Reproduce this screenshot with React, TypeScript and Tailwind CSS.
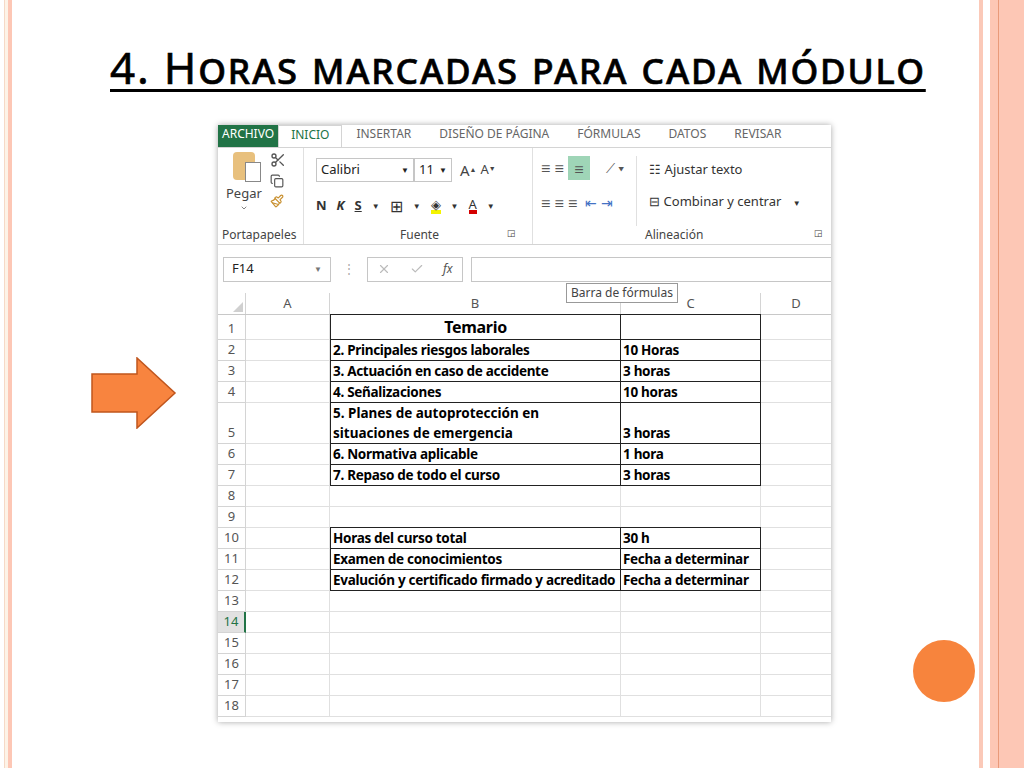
import { Scissors, Copy, Paintbrush, X, Check, ChevronDown } from "lucide-react";

const rowH = [25, 21, 21, 21, 41, 21, 21, 21, 21, 21, 21, 21, 21, 21, 21, 21, 21, 21];
type R = { b?: string; c?: string; box?: boolean; head?: boolean; wrap?: boolean };
const rows: R[] = [
  { b: "Temario", head: true, box: true },
  { b: "2. Principales riesgos laborales", c: "10 Horas", box: true },
  { b: "3. Actuación en caso de accidente", c: "3 horas", box: true },
  { b: "4. Señalizaciones", c: "10 horas", box: true },
  { b: "5. Planes de autoprotección en situaciones de emergencia", c: "3 horas", box: true, wrap: true },
  { b: "6. Normativa aplicable", c: "1 hora", box: true },
  { b: "7. Repaso de todo el curso", c: "3 horas", box: true },
  {}, {},
  { b: "Horas del curso total", c: "30 h", box: true },
  { b: "Examen de conocimientos", c: "Fecha a determinar", box: true },
  { b: "Evalución y certificado firmado y acreditado", c: "Fecha a determinar", box: true },
  {}, {}, {}, {}, {}, {},
];

function Grid() {
  return (
    <div className="font-['Liberation_Sans',sans-serif] text-[13px]">
      <div className="flex h-[22px] bg-white border-b border-[#c8c8c8] text-[#555]">
        <div className="w-[28px] border-r border-[#d4d4d4] flex items-end justify-end p-[2px]"><div className="w-0 h-0 border-l-[10px] border-l-transparent border-b-[10px] border-b-[#d0d0d0]" /></div>
        <div className="w-[84px] border-r border-[#d4d4d4] flex items-center justify-center">A</div>
        <div className="w-[291px] border-r border-[#d4d4d4] flex items-center justify-center">B</div>
        <div className="w-[140px] border-r border-[#d4d4d4] flex items-center justify-center">C</div>
        <div className="w-[70px] flex items-center justify-center">D</div>
      </div>
      {rows.map((r, i) => (
        <div key={i} className="flex" style={{ height: rowH[i] }}>
          <div className={`w-[28px] border-r border-b border-[#d4d4d4] flex items-end justify-center pb-[1px] ${i === 13 ? "bg-[#e1e1e1] text-[#217346] border-r-2 border-r-[#217346]" : "bg-white text-[#555]"}`}>{i + 1}</div>
          <div className="w-[84px] border-r border-b border-[#e0e0e0]" />
          <div className={`w-[291px] px-[2px] font-['Open_Sans',sans-serif] font-bold text-[13.5px] leading-[20px] text-black ${r.box ? "border-[1.5px] border-[#222] -mt-[1px]" : "border-r border-b border-[#e0e0e0]"} ${r.head ? "text-center text-[16px] leading-[24px]" : ""} flex items-end ${r.head ? "justify-center" : ""}`}>
            <span className={r.wrap ? "pr-2" : "whitespace-nowrap tracking-[-0.3px]"}>{r.b}</span>
          </div>
          <div className={`w-[140px] px-[2px] font-['Open_Sans',sans-serif] font-bold text-[13.5px] leading-[20px] text-black flex items-end whitespace-nowrap tracking-[-0.3px] ${r.box ? "border-[1.5px] border-l-0 border-[#222] -mt-[1px]" : "border-r border-b border-[#e0e0e0]"}`}>{r.c}</div>
          <div className="w-[70px] border-b border-[#e0e0e0]" />
        </div>
      ))}
    </div>
  );
}

function Ribbon() {
  return (
    <div className="font-['Liberation_Sans',sans-serif] text-[12px] text-[#444]">
      <div className="flex h-[22px] items-end bg-white text-[12px] text-[#666] overflow-hidden">
        <div className="bg-[#217346] text-white px-1 h-[22px] flex items-start -mt-3">ARCHIVO</div>
        <div className="px-3 h-[22px] border-x border-t border-[#d4d4d4] text-[#217346] -mt-3 flex items-start">INICIO</div>
        {["INSERTAR", "DISEÑO DE PÁGINA", "FÓRMULAS", "DATOS", "REVISAR"].map((t) => (
          <div key={t} className="px-[14px] h-[22px] flex items-start -mt-3">{t}</div>
        ))}
      </div>
      <div className="h-[98px] bg-white border-t border-b border-[#d4d4d4] flex">
        <div className="w-[86px] border-r border-[#e0e0e0] flex flex-col">
          <div className="flex flex-1 pt-1 pl-2 gap-2">
            <div className="flex flex-col items-center">
              <div className="w-[22px] h-[28px] bg-[#e8c07d] rounded-sm relative"><div className="absolute right-[-6px] bottom-[-2px] w-[16px] h-[20px] bg-white border border-[#888]" /></div>
              <span className="mt-1 text-[13px]">Pegar</span>
              <ChevronDown size={8} />
            </div>
            <div className="flex flex-col gap-[6px] text-[#555]"><Scissors size={16} /><Copy size={14} /><Paintbrush size={14} className="text-[#c89030]" /></div>
          </div>
          <div className="h-[18px] text-[12px] pl-1">Portapapeles ◲</div>
        </div>
        <div className="w-[229px] border-r border-[#e0e0e0] flex flex-col">
          <div className="flex-1 pt-[10px] pl-[12px]">
            <div className="flex items-center gap-1">
              <div className="w-[98px] h-[24px] border border-[#c6c6c6] flex items-center justify-between px-1 text-[13px] text-[#222]">Calibri<span className="text-[8px]">▼</span></div>
              <div className="w-[38px] h-[24px] border border-[#c6c6c6] flex items-center justify-between px-1 text-[13px] text-[#222] -ml-1">11<span className="text-[8px]">▼</span></div>
              <span className="text-[15px] ml-1">A<sup className="text-[7px]">▲</sup></span><span className="text-[13px]">A<sup className="text-[7px]">▼</sup></span>
            </div>
            <div className="flex items-center gap-[10px] mt-[12px] text-[13px] text-[#333]">
              <b>N</b><b><i>K</i></b><b className="underline">S</b><span className="text-[8px]">▼</span>
              <span className="text-[16px]">⊞</span><span className="text-[8px]">▼</span>
              <span className="border-b-4 border-[#f4f400] leading-3">◈</span><span className="text-[8px]">▼</span>
              <span className="border-b-4 border-[#d40000] leading-3">A</span><span className="text-[8px]">▼</span>
            </div>
          </div>
          <div className="h-[18px] flex justify-between px-4"><span className="ml-20">Fuente</span><span className="text-[9px]">◲</span></div>
        </div>
        <div className="flex-1 flex flex-col">
          <div className="flex-1 flex pt-2 pl-2 text-[#555]">
            <div className="flex flex-col gap-3 text-[16px] leading-[22px]">
              <div className="flex gap-1 items-center">≡ ≡ <span className="bg-[#9fd5b7] w-[22px] h-[24px] inline-flex items-end justify-center">≡</span><span className="ml-3 text-[13px]">⟋ ▾</span></div>
              <div className="flex gap-2 items-center">≡ ≡ ≡ <span className="text-[#4472c4] text-[14px]">⇤ ⇥</span></div>
            </div>
            <div className="ml-3 border-l border-[#e0e0e0] pl-3 flex flex-col gap-[12px] pt-1 text-[13px] text-[#333]">
              <div>☷ Ajustar texto</div>
              <div>⊟ Combinar y centrar <span className="text-[8px] ml-2">▼</span></div>
            </div>
          </div>
          <div className="h-[18px] flex justify-between px-2"><span className="ml-[104px]">Alineación</span><span className="text-[9px]">◲</span></div>
        </div>
      </div>
      <div className="h-[48px] bg-white flex items-center gap-2 pl-[5px] relative">
        <div className="w-[108px] h-[25px] border border-[#c6c6c6] flex items-center justify-between px-2 text-[13px] text-[#222]">F14<span className="text-[8px] text-[#777]">▼</span></div>
        <span className="text-[#aaa] mx-1">⋮</span>
        <div className="w-[96px] h-[25px] border border-[#c6c6c6] flex items-center justify-around text-[#bbb]"><X size={14} /><Check size={14} /><i className="text-[#555] font-['Liberation_Serif',serif]">fx</i></div>
        <div className="flex-1 h-[25px] border border-[#c6c6c6] border-r-0" />
        <div className="absolute left-[348px] top-[38px] bg-white border border-[#999] px-1 text-[12px] text-[#444] z-10">Barra de fórmulas</div>
      </div>
    </div>
  );
}

export default function App() {
  return (
    <div className="w-[1024px] h-[768px] bg-white flex overflow-hidden">
      <div className="w-[4px]" />
      <div className="w-[1px] bg-[#f6d9c6]" />
      <div className="w-[3px] bg-[#fdf3e7]" />
      <div className="w-[4px] bg-[#fdc7b5]" />
      <div className="flex-1 flex flex-col">
        <h1 className="mt-[40px] ml-[98px] w-fit whitespace-nowrap text-[44px] leading-[54px] tracking-[1.8px] font-['DejaVu_Sans',sans-serif] [-webkit-text-stroke:0.6px_black] text-black [font-variant:small-caps] underline decoration-[3px] underline-offset-[5px]">4. Horas marcadas para cada módulo</h1>
        <div className="flex mt-[31px]">
          <div className="ml-[79px] mt-[232px] w-[86px] h-[72px]">
            <svg width="86" height="72" viewBox="0 0 86 72"><path d="M1 17H46V1L84 36L46 71V55H1Z" fill="#f8843f" stroke="#c0551d" strokeWidth="1.5" /></svg>
          </div>
          <div className="ml-[41px] w-[613px] h-[597px] overflow-hidden shadow-[0_0_6px_rgba(0,0,0,0.35)] bg-white">
            <Ribbon />
            <Grid />
          </div>
          <div className="ml-[82px] mt-[515px] w-[62px] h-[62px] rounded-full bg-[#f7843d]" />
        </div>
      </div>
      <div className="w-[4px] bg-[#fbc9b8]" />
      <div className="w-[7px] bg-white" />
      <div className="w-[8px] bg-[#fdc7b5]" />
      <div className="w-[1px] bg-[#e99a7a]" />
      <div className="w-[25px] bg-[#fdc7b5]" />
    </div>
  );
}
